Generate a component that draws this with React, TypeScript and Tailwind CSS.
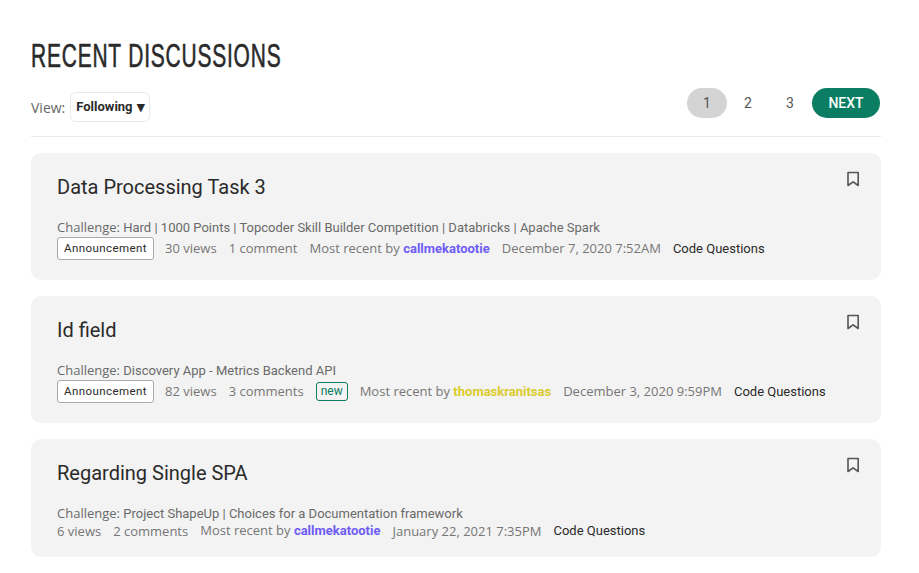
import React from "react";

const Bookmark = () => (
  <svg width="14" height="16" viewBox="0 0 14 16" fill="none" stroke="#555" strokeWidth="1.6" className="absolute right-[21px] top-[18px]">
    <path d="M2 1.5h10.2v13L7.1 10.8 2 14.5z" strokeLinejoin="round" />
  </svg>
);

const Tag = () => (
  <span className="mr-[11px] flex h-[23px] items-center rounded-[3px] border border-[#aaaaaa] bg-white px-[6px] font-['Roboto',sans-serif] text-[11.5px] tracking-[0.43px] text-[#2a2a2a]">
    Announcement
  </span>
);

type Meta = {
  title: string;
  challenge: string;
  tag?: boolean;
  views: string;
  comments: string;
  isNew?: boolean;
  user: string;
  userColor: string;
  date: string;
};

const items: Meta[] = [
  { title: "Data Processing Task 3", challenge: "Hard | 1000 Points | Topcoder Skill Builder Competition | Databricks | Apache Spark", tag: true, views: "30 views", comments: "1 comment", user: "callmekatootie", userColor: "text-[#6e5cf6]", date: "December 7, 2020 7:52AM" },
  { title: "Id field", challenge: "Discovery App - Metrics Backend API", tag: true, views: "82 views", comments: "3 comments", isNew: true, user: "thomaskranitsas", userColor: "text-[#dccb2b]", date: "December 3, 2020 9:59PM" },
  { title: "Regarding Single SPA", challenge: "Project ShapeUp | Choices for a Documentation framework", views: "6 views", comments: "2 comments", user: "callmekatootie", userColor: "text-[#6e5cf6]", date: "January 22, 2021 7:35PM" },
];

const Card = ({ m }: { m: Meta }) => (
  <div className={`relative rounded-[10px] bg-[#f3f3f3] pl-[26px] pr-[21px] pt-[21px] ${m.tag ? "pb-[20px]" : "pb-[16px]"}`}>
    <Bookmark />
    <h2 className="font-['Roboto',sans-serif] text-[20px] leading-[27px] text-[#2a2a2a]">{m.title}</h2>
    <div className="mt-[18px] font-['Roboto',sans-serif] text-[13px] leading-[18px] text-[#6a6a6a]">
      <span className="font-['Open_Sans',sans-serif] leading-none">Challenge:</span> {m.challenge}
    </div>
    <div className={`flex items-center font-['Open_Sans',sans-serif] text-[13px] text-[#767676] ${m.tag ? "h-[23px]" : "mt-[-1px] h-[19px]"}`}>
      {m.tag && <Tag />}
      <span className="mr-[12px]">{m.views}</span>
      <span className="mr-[12px]">{m.comments}</span>
      {m.isNew && (
        <span className="mr-[12px] flex h-[19px] items-center rounded-[3px] border border-[#0a7d62] px-[4px] pb-[1px] font-['Roboto',sans-serif] text-[12px] text-[#0a7d62]">new</span>
      )}
      <span className={`mr-[12px] ${m.tag ? "" : "mt-[-2px]"}`}>
        Most recent by <span className={`font-['Roboto',sans-serif] text-[13px] font-bold ${m.userColor}`}>{m.user}</span>
      </span>
      <span className="mr-[12px]">{m.date}</span>
      <span className={`font-['Roboto',sans-serif] text-[13px] text-[#2a2a2a] ${m.tag ? "" : "mt-[-2px]"}`}>Code Questions</span>
    </div>
  </div>
);

export default function App() {
  return (
    <div className="min-h-[573px] overflow-hidden bg-white pl-[31px] pr-[38px] pt-[36px]">
      <h1 className="origin-left scale-x-[0.625] whitespace-nowrap font-['Liberation_Sans',sans-serif] text-[33.5px] leading-[40px] tracking-[1.3px] text-[#2a2a2a] [-webkit-text-stroke:0.6px_#2a2a2a]">RECENT DISCUSSIONS</h1>
      <div className="mt-[12px] flex h-[34px] items-start justify-between">
        <div className="mt-[4px] flex items-center">
          <span className="mr-[5px] font-['Open_Sans',sans-serif] text-[14px] text-[#666666]">View:</span>
          <div className="flex h-[30px] items-center rounded-[6px] border border-[#e9e9e9] bg-white px-[5px] font-['Roboto',sans-serif] text-[13px] font-bold text-[#2a2a2a]">
            Following<span className="ml-[4px] w-[7px] text-center text-[15px] leading-none">▾</span>
          </div>
        </div>
        <div className="mr-[1px] flex items-center font-['Roboto',sans-serif] text-[14px] text-[#555555]">
          <span className="flex h-[30px] w-[40px] items-center justify-center rounded-full bg-[#d4d4d4]">1</span>
          <span className="flex h-[30px] w-[42px] items-center justify-center">2</span>
          <span className="flex h-[30px] w-[42px] items-center justify-center">3</span>
          <span className="ml-[1px] flex h-[30px] w-[68px] items-center justify-center rounded-full bg-[#0a7d62] font-medium text-white">NEXT</span>
        </div>
      </div>
      <div className="mb-[16px] mt-[14px] h-px bg-[#e9e9e9]" />
      <div className="flex flex-col gap-[16px]">
        {items.map((m) => (
          <Card key={m.title} m={m} />
        ))}
      </div>
    </div>
  );
}
